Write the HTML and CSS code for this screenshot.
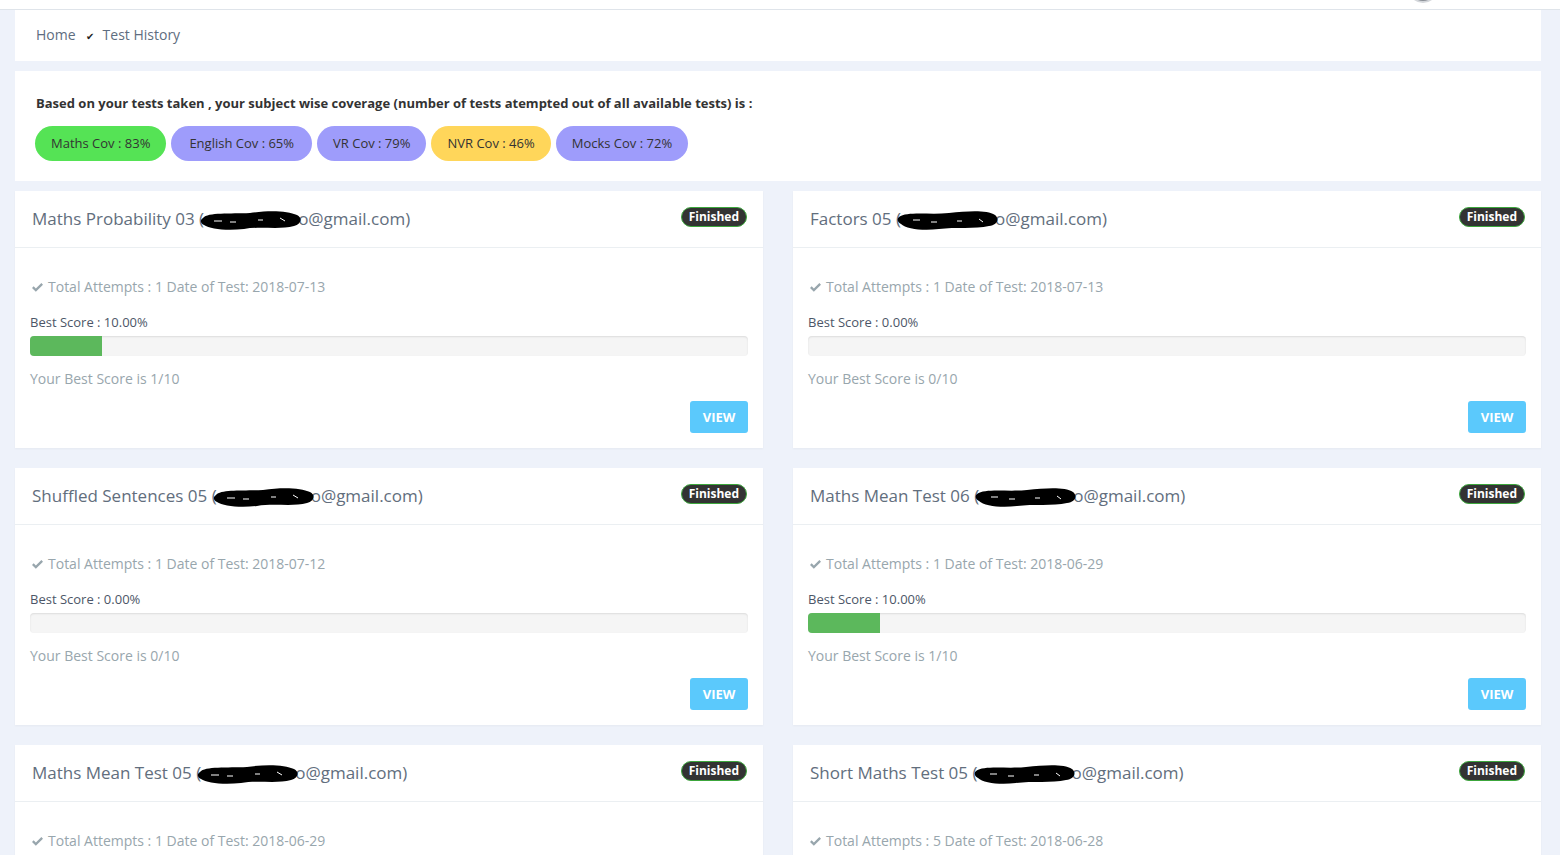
FILE: index.html
```html
<!DOCTYPE html>
<html lang="en">
<head>
  <meta charset="UTF-8" />
  <meta name="viewport" content="width=device-width, initial-scale=1.0" />
  <title>Test History</title>
  <link rel="stylesheet" href="styles.css">
</head>
<body>

  <header class="topbar">
    <span class="avatar"></span>
  </header>

  <main class="page">
    <div class="panel breadcrumb">
      <a href="#">Home</a>
      <span class="sep">&#10004;</span>
      <span class="current">Test History</span>
    </div>

    <div class="panel coverage">
      <p class="coverage-title">Based on your tests taken , your subject wise coverage (number of tests atempted out of all available tests) is :</p>
      <div class="pills">
        <span class="pill green">Maths Cov : 83%</span>
        <span class="pill purple wide">English Cov : 65%</span>
        <span class="pill purple">VR Cov : 79%</span>
        <span class="pill yellow">NVR Cov : 46%</span>
        <span class="pill purple">Mocks Cov : 72%</span>
      </div>
    </div>

    <div class="cards">

      <div class="card">
        <div class="card-head">
          <h3>Maths Probability 03 (<svg class="blot" viewBox="0 0 102 22"><path d="M3 9 C8 3 30 5 50 4 C70 1 88 2 97 6 C103 9 101 15 94 17 C80 21 60 17 44 20 C26 22 10 20 4 16 C0 14 0 11 3 9Z"/><path d="M14 12 h8 M30 13 h6 M58 11 h5 M80 9 l5 3" stroke="#fff" stroke-width="1"/></svg>o@gmail.com)</h3>
          <span class="badge">Finished</span>
        </div>
        <div class="card-body">
          <p class="attempts"><svg class="tick" viewBox="0 0 14 12"><path d="M1 6.5 L2.8 4.7 L5.2 7.1 L11.2 1.1 L13 2.9 L5.2 10.7Z"/></svg>Total Attempts : 1 Date of Test: 2018-07-13</p>
          <p class="best">Best Score : 10.00%</p>
          <div class="progress"><div class="bar" style="width: 10%"></div></div>
          <p class="summary">Your Best Score is 1/10</p>
          <div class="actions"><button>VIEW</button></div>
        </div>
      </div>

      <div class="card">
        <div class="card-head">
          <h3>Factors 05 (<svg class="blot" viewBox="0 0 102 22"><path d="M2 8 C10 2 32 6 52 4 C72 2 90 1 98 6 C103 10 100 16 92 17 C78 20 58 18 42 20 C26 22 9 20 4 15 C0 13 0 10 2 8Z"/><path d="M16 11 h7 M34 13 h6 M60 12 h5 M82 10 l4 3" stroke="#fff" stroke-width="1"/></svg>o@gmail.com)</h3>
          <span class="badge">Finished</span>
        </div>
        <div class="card-body">
          <p class="attempts"><svg class="tick" viewBox="0 0 14 12"><path d="M1 6.5 L2.8 4.7 L5.2 7.1 L11.2 1.1 L13 2.9 L5.2 10.7Z"/></svg>Total Attempts : 1 Date of Test: 2018-07-13</p>
          <p class="best">Best Score : 0.00%</p>
          <div class="progress"><div class="bar" style="width: 0%"></div></div>
          <p class="summary">Your Best Score is 0/10</p>
          <div class="actions"><button>VIEW</button></div>
        </div>
      </div>

      <div class="card">
        <div class="card-head">
          <h3>Shuffled Sentences 05 (<svg class="blot" viewBox="0 0 102 22"><path d="M3 9 C8 3 30 5 50 4 C70 1 88 2 97 6 C103 9 101 15 94 17 C80 21 60 17 44 20 C26 22 10 20 4 16 C0 14 0 11 3 9Z"/><path d="M14 12 h8 M30 13 h6 M58 11 h5 M80 9 l5 3" stroke="#fff" stroke-width="1"/></svg>o@gmail.com)</h3>
          <span class="badge">Finished</span>
        </div>
        <div class="card-body">
          <p class="attempts"><svg class="tick" viewBox="0 0 14 12"><path d="M1 6.5 L2.8 4.7 L5.2 7.1 L11.2 1.1 L13 2.9 L5.2 10.7Z"/></svg>Total Attempts : 1 Date of Test: 2018-07-12</p>
          <p class="best">Best Score : 0.00%</p>
          <div class="progress"><div class="bar" style="width: 0%"></div></div>
          <p class="summary">Your Best Score is 0/10</p>
          <div class="actions"><button>VIEW</button></div>
        </div>
      </div>

      <div class="card">
        <div class="card-head">
          <h3>Maths Mean Test 06 (<svg class="blot" viewBox="0 0 102 22"><path d="M2 8 C10 2 32 6 52 4 C72 2 90 1 98 6 C103 10 100 16 92 17 C78 20 58 18 42 20 C26 22 9 20 4 15 C0 13 0 10 2 8Z"/><path d="M16 11 h7 M34 13 h6 M60 12 h5 M82 10 l4 3" stroke="#fff" stroke-width="1"/></svg>o@gmail.com)</h3>
          <span class="badge">Finished</span>
        </div>
        <div class="card-body">
          <p class="attempts"><svg class="tick" viewBox="0 0 14 12"><path d="M1 6.5 L2.8 4.7 L5.2 7.1 L11.2 1.1 L13 2.9 L5.2 10.7Z"/></svg>Total Attempts : 1 Date of Test: 2018-06-29</p>
          <p class="best">Best Score : 10.00%</p>
          <div class="progress"><div class="bar" style="width: 10%"></div></div>
          <p class="summary">Your Best Score is 1/10</p>
          <div class="actions"><button>VIEW</button></div>
        </div>
      </div>

      <div class="card">
        <div class="card-head">
          <h3>Maths Mean Test 05 (<svg class="blot" viewBox="0 0 102 22"><path d="M3 9 C8 3 30 5 50 4 C70 1 88 2 97 6 C103 9 101 15 94 17 C80 21 60 17 44 20 C26 22 10 20 4 16 C0 14 0 11 3 9Z"/><path d="M14 12 h8 M30 13 h6 M58 11 h5 M80 9 l5 3" stroke="#fff" stroke-width="1"/></svg>o@gmail.com)</h3>
          <span class="badge">Finished</span>
        </div>
        <div class="card-body">
          <p class="attempts"><svg class="tick" viewBox="0 0 14 12"><path d="M1 6.5 L2.8 4.7 L5.2 7.1 L11.2 1.1 L13 2.9 L5.2 10.7Z"/></svg>Total Attempts : 1 Date of Test: 2018-06-29</p>
          <p class="best">Best Score : 0.00%</p>
          <div class="progress"><div class="bar" style="width: 0%"></div></div>
          <p class="summary">Your Best Score is 0/10</p>
          <div class="actions"><button>VIEW</button></div>
        </div>
      </div>

      <div class="card">
        <div class="card-head">
          <h3>Short Maths Test 05 (<svg class="blot" viewBox="0 0 102 22"><path d="M2 8 C10 2 32 6 52 4 C72 2 90 1 98 6 C103 10 100 16 92 17 C78 20 58 18 42 20 C26 22 9 20 4 15 C0 13 0 10 2 8Z"/><path d="M16 11 h7 M34 13 h6 M60 12 h5 M82 10 l4 3" stroke="#fff" stroke-width="1"/></svg>o@gmail.com)</h3>
          <span class="badge">Finished</span>
        </div>
        <div class="card-body">
          <p class="attempts"><svg class="tick" viewBox="0 0 14 12"><path d="M1 6.5 L2.8 4.7 L5.2 7.1 L11.2 1.1 L13 2.9 L5.2 10.7Z"/></svg>Total Attempts : 5 Date of Test: 2018-06-28</p>
          <p class="best">Best Score : 0.00%</p>
          <div class="progress"><div class="bar" style="width: 0%"></div></div>
          <p class="summary">Your Best Score is 0/10</p>
          <div class="actions"><button>VIEW</button></div>
        </div>
      </div>

    </div>
  </main>

</body>
</html>
```

FILE: styles.css
```css
* { margin: 0; padding: 0; box-sizing: border-box; }
body {
  font-family: "Open Sans", Arial, sans-serif;
  background-color: #eef2fa;
  color: #4c5667;
  overflow: hidden;
}
.topbar {
  height: 10px;
  background-color: #fff;
  border-bottom: 1px solid #dfe4ea;
  display: flex;
  justify-content: flex-end;
  padding-right: 122px;
  overflow: hidden;
}
.avatar {
  width: 30px;
  height: 30px;
  border-radius: 50%;
  background-color: #8a8f96;
  border: 2px solid #d4d7db;
  margin-top: -27px;
}
.page {
  padding: 0 19px 0 15px;
  display: flex;
  flex-direction: column;
  gap: 10px;
}
.panel {
  background-color: #fff;
}
.breadcrumb {
  height: 51px;
  display: flex;
  align-items: center;
  padding: 0 0 2px 21px;
  font-size: 14px;
  color: #5e6d80;
}
.breadcrumb a {
  color: #5e6d80;
  text-decoration: none;
}
.breadcrumb .sep {
  font-size: 10px;
  color: #222;
  margin: 2px 9px 0 10px;
}
.coverage {
  height: 110px;
  padding: 23px 20px 0 21px;
}
.coverage-title {
  font-size: 13px;
  font-weight: bold;
  color: #333;
  line-height: 18px;
}
.pills {
  display: flex;
  gap: 5px;
  margin-top: 14px;
  margin-left: -1px;
}
.pill {
  height: 35px;
  line-height: 35px;
  padding: 0 16px;
  border-radius: 18px;
  font-size: 13px;
  color: #333;
}
.pill.wide { padding: 0 18px; }
.pill.green { background-color: #55e355; }
.pill.purple { background-color: #9e9cfb; }
.pill.yellow { background-color: #ffd65a; }
.cards {
  display: grid;
  grid-template-columns: 1fr 1fr;
  column-gap: 30px;
  row-gap: 20px;
}
.card {
  background-color: #fff;
  box-shadow: 0 1px 2px rgba(0, 0, 0, 0.04);
}
.card-head {
  height: 57px;
  border-bottom: 1px solid #ebeff2;
  display: flex;
  align-items: center;
  justify-content: space-between;
  padding: 0 16px 1px 17px;
}
.card-head h3 {
  font-size: 17px;
  font-weight: normal;
  color: #626e7d;
  display: flex;
  align-items: center;
}
.blot {
  width: 102px;
  height: 22px;
  margin: 2px -4px 0 -4px;
  position: relative;
}
.blot path { fill: #000; }
.blot path + path { fill: none; }
.badge {
  background-color: #333;
  color: #fff;
  font-size: 12px;
  font-weight: bold;
  border: 1px solid #3ca63c;
  border-radius: 10px;
  padding: 0 7px;
  line-height: 18px;
  margin-top: -3px;
}
.card-body {
  padding: 29px 15px 15px 15px;
}
.attempts {
  font-size: 14px;
  line-height: 20px;
  color: #98a6ad;
  display: flex;
  align-items: center;
}
.tick {
  width: 13px;
  height: 11px;
  margin: 0 4px 0 1px;
}
.tick path { fill: #98a6ad; }
.best {
  font-size: 13px;
  line-height: 18px;
  margin-top: 16px;
  color: #4c5667;
}
.progress {
  height: 20px;
  margin-top: 5px;
  background-color: #f5f5f5;
  border-radius: 4px;
  box-shadow: inset 0 1px 2px rgba(0, 0, 0, 0.1);
  overflow: hidden;
}
.progress .bar {
  height: 100%;
  background-color: #5cb85c;
}
.summary {
  font-size: 14px;
  line-height: 20px;
  margin-top: 13px;
  color: #98a6ad;
}
.actions {
  display: flex;
  justify-content: flex-end;
  margin-top: 12px;
}
.actions button {
  width: 58px;
  height: 32px;
  background-color: #5bc9fc;
  color: #fff;
  border: none;
  border-radius: 3px;
  font-family: "Open Sans", Arial, sans-serif;
  font-size: 13px;
  font-weight: bold;
  cursor: pointer;
}
```
